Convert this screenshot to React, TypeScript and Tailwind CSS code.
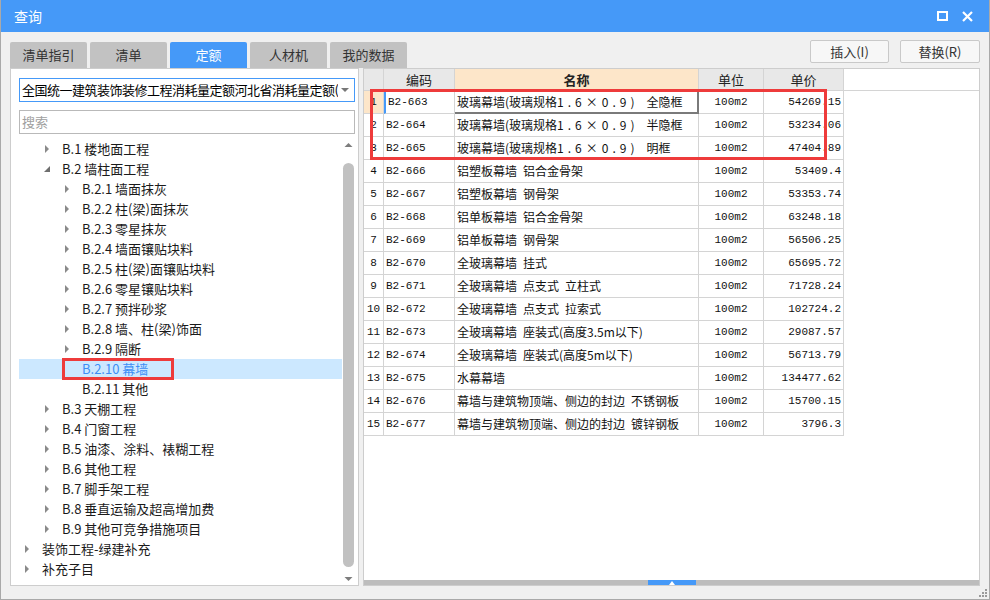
import React from "react";

const UI = { fontFamily: '"Noto Sans CJK SC", "Noto Sans", sans-serif' };
const TBL = { fontFamily: '"Liberation Mono", "Noto Sans CJK SC", monospace' };
const CJK = { fontFamily: '"Noto Sans CJK SC", sans-serif' };

type Node = { label: string; level: number; arrow: "right" | "down" | "none"; selected?: boolean };

const tree: Node[] = [
  { label: "B.1 楼地面工程", level: 1, arrow: "right" },
  { label: "B.2 墙柱面工程", level: 1, arrow: "down" },
  { label: "B.2.1 墙面抹灰", level: 2, arrow: "right" },
  { label: "B.2.2 柱(梁)面抹灰", level: 2, arrow: "right" },
  { label: "B.2.3 零星抹灰", level: 2, arrow: "right" },
  { label: "B.2.4 墙面镶贴块料", level: 2, arrow: "right" },
  { label: "B.2.5 柱(梁)面镶贴块料", level: 2, arrow: "right" },
  { label: "B.2.6 零星镶贴块料", level: 2, arrow: "right" },
  { label: "B.2.7 预拌砂浆", level: 2, arrow: "right" },
  { label: "B.2.8 墙、柱(梁)饰面", level: 2, arrow: "right" },
  { label: "B.2.9 隔断", level: 2, arrow: "right" },
  { label: "B.2.10 幕墙", level: 2, arrow: "none", selected: true },
  { label: "B.2.11 其他", level: 2, arrow: "none" },
  { label: "B.3 天棚工程", level: 1, arrow: "right" },
  { label: "B.4 门窗工程", level: 1, arrow: "right" },
  { label: "B.5 油漆、涂料、裱糊工程", level: 1, arrow: "right" },
  { label: "B.6 其他工程", level: 1, arrow: "right" },
  { label: "B.7 脚手架工程", level: 1, arrow: "right" },
  { label: "B.8 垂直运输及超高增加费", level: 1, arrow: "right" },
  { label: "B.9 其他可竞争措施项目", level: 1, arrow: "right" },
  { label: "装饰工程-绿建补充", level: 0, arrow: "right" },
  { label: "补充子目", level: 0, arrow: "right" },
];

const rows: [string, string, string, string][] = [
  ["B2-663", "玻璃幕墙(玻璃规格1.6×0.9) 全隐框", "100m2", "54269.15"],
  ["B2-664", "玻璃幕墙(玻璃规格1.6×0.9) 半隐框", "100m2", "53234.06"],
  ["B2-665", "玻璃幕墙(玻璃规格1.6×0.9) 明框", "100m2", "47404.89"],
  ["B2-666", "铝塑板幕墙 铝合金骨架", "100m2", "53409.4"],
  ["B2-667", "铝塑板幕墙 钢骨架", "100m2", "53353.74"],
  ["B2-668", "铝单板幕墙 铝合金骨架", "100m2", "63248.18"],
  ["B2-669", "铝单板幕墙 钢骨架", "100m2", "56506.25"],
  ["B2-670", "全玻璃幕墙 挂式", "100m2", "65695.72"],
  ["B2-671", "全玻璃幕墙 点支式 立柱式", "100m2", "71728.24"],
  ["B2-672", "全玻璃幕墙 点支式 拉索式", "100m2", "102724.2"],
  ["B2-673", "全玻璃幕墙 座装式(高度3.5m以下)", "100m2", "29087.57"],
  ["B2-674", "全玻璃幕墙 座装式(高度5m以下)", "100m2", "56713.79"],
  ["B2-675", "水幕幕墙", "100m2", "134477.62"],
  ["B2-676", "幕墙与建筑物顶端、侧边的封边 不锈钢板", "100m2", "15700.15"],
  ["B2-677", "幕墙与建筑物顶端、侧边的封边 镀锌钢板", "100m2", "3796.3"],
];

function Name({ text }: { text: string }) {
  const m = text.match(/^(.*?)(1\.6×0\.9)(.*)$/);
  const fix = (s: string) => s.replace(/ /g, "\u2002");
  if (m) {
    return (
      <>
        {fix(m[1])}
        <span className="tracking-[4px]">{m[2]}</span>
        {fix(m[3].replace(") ", ")\u2002\u2002"))}
      </>
    );
  }
  return <>{fix(text)}</>;
}

function Arrow({ dir }: { dir: "right" | "down" | "none" }) {
  if (dir === "none") return <span className="inline-block w-[8px]" />;
  if (dir === "right")
    return (
      <svg width="8" height="10" viewBox="0 0 8 10">
        <path d="M2 1 L6 5 L2 9 Z" fill="#8a8a8a" />
      </svg>
    );
  return (
    <svg width="8" height="10" viewBox="0 0 8 10">
      <path d="M7 2 L7 8 L1 8 Z" fill="#6f6f6f" />
    </svg>
  );
}

const tabs = ["清单指引", "清单", "定额", "人材机", "我的数据"];

export default function App() {
  return (
    <div className="w-[990px] h-[600px] bg-[#f0f0f0] border border-[#a9a9a9] border-t-0 flex flex-col overflow-hidden" style={UI}>
      {/* Title bar */}
      <div className="h-[32px] bg-[#4599f8] flex items-center px-[13px] text-white shrink-0">
        <span className="text-[14px]">查询</span>
        <div className="ml-auto flex items-center gap-[14px] pr-[3px]">
          <svg width="11" height="10" viewBox="0 0 11 10">
            <rect x="1" y="1" width="9" height="8" fill="none" stroke="white" strokeWidth="2" />
          </svg>
          <svg width="11" height="11" viewBox="0 0 11 11">
            <path d="M1 1 L10 10 M10 1 L1 10" stroke="white" strokeWidth="2.2" />
          </svg>
        </div>
      </div>

      <div className="flex-1 flex flex-col px-[9px]">
        {/* Tabs + buttons */}
        <div className="flex items-end h-[36px] shrink-0">
          <div className="flex gap-[3px] pt-[10px]">
            {tabs.map((t) => (
              <div
                key={t}
                className={
                  "w-[77px] h-[26px] flex items-center justify-center text-[13px] rounded-t-[2px] " +
                  (t === "定额" ? "bg-[#4599f8] text-white" : "bg-[#c2c2c2] text-[#333]")
                }
              >
                {t}
              </div>
            ))}
          </div>
          <div className="ml-auto flex gap-[11px] self-start pt-[8px] pr-0">
            <div className="w-[79px] h-[23px] bg-[#f7f7f7] border border-[#c9c9c9] rounded-[2px] flex items-center justify-center text-[13px] text-[#333]">
              插入(I)
            </div>
            <div className="w-[80px] h-[23px] bg-[#f7f7f7] border border-[#c9c9c9] rounded-[2px] flex items-center justify-center text-[13px] text-[#333]">
              替换(R)
            </div>
          </div>
        </div>

        {/* Main */}
        <div className="flex gap-[4px] h-[518px]">
          {/* Left panel */}
          <div className="w-[349px] h-full bg-white border border-[#cdcdcd] flex flex-col">
            <div className="pl-[8px] pr-[3px] pt-[9px] flex flex-col gap-[8px]">
              <div className="h-[24px] border border-[#4599f8] flex items-center pl-[2px] pr-[5px] overflow-hidden">
                <span className="text-[13px] text-black whitespace-nowrap overflow-hidden flex-1 tracking-[-0.5px]">
                  全国统一建筑装饰装修工程消耗量定额河北省消耗量定额(2012)
                </span>
                <svg width="8" height="5" viewBox="0 0 8 5" className="ml-[3px] shrink-0">
                  <path d="M0 0 L8 0 L4 4 Z" fill="#777" />
                </svg>
              </div>
              <div className="h-[24px] border border-[#b9b9b9] flex items-center pl-[2px]">
                <span className="text-[13px] text-[#a0a0a0]">搜索</span>
              </div>
            </div>
            <div className="flex flex-1 pt-[5px] pl-[8px] pr-[3px] min-h-0">
              <div className="flex-1 flex flex-col">
                {tree.map((n, i) => (
                  <div
                    key={i}
                    className={"h-[20px] flex items-center relative " + (n.selected ? "bg-[#cce8ff]" : "")}
                  >
                    <div className="flex items-center" style={{ paddingLeft: 4 + n.level * 20 }}>
                      <Arrow dir={n.arrow} />
                    </div>
                    <span
                      className={"text-[13px] whitespace-nowrap ml-[11px] " + (n.selected ? "text-[#3d8ef5]" : "text-[#1a1a1a]")}
                    >
                      {n.label}
                    </span>
                    {n.selected && (
                      <div className="absolute left-[43px] top-[-1px] w-[112px] h-[22px] border-[3px] border-[#ee3b3b]" />
                    )}
                  </div>
                ))}
              </div>
              {/* scrollbar */}
              <div className="w-[13px] flex flex-col items-center">
                <svg width="9" height="8" viewBox="0 0 9 8" className="mt-[2px]">
                  <path d="M0.5 6 L4.5 2 L8.5 6 Z" fill="#7d7d7d" />
                </svg>
                <div className="w-[11px] flex-1 bg-[#c1c1c1] rounded-full mt-[14px] mb-[8px]" />
                <svg width="9" height="8" viewBox="0 0 9 8" className="mb-[2px]">
                  <path d="M0.5 2 L4.5 6 L8.5 2 Z" fill="#7d7d7d" />
                </svg>
              </div>
            </div>
          </div>

          {/* Table panel */}
          <div className="flex-1 h-full bg-white border border-[#cdcdcd] flex flex-col relative">
            <div className="flex-1">
              <div className="flex h-[22px] text-[13px] text-[#222] border-b border-[#d4d4d4]" style={CJK}>
                <div className="w-[20px] bg-[#e8e8e8] border-r border-[#d4d4d4]" />
                <div className="w-[71px] bg-[#e8e8e8] border-r border-[#d4d4d4] flex items-center justify-center">编码</div>
                <div className="w-[244px] bg-[#fde6c9] border-r border-[#d4d4d4] flex items-center justify-center font-bold">名称</div>
                <div className="w-[65px] bg-[#e8e8e8] border-r border-[#d4d4d4] flex items-center justify-center">单位</div>
                <div className="w-[80px] bg-[#e8e8e8] border-r border-[#d4d4d4] flex items-center justify-center">单价</div>
              </div>
              {rows.map((r, i) => (
                <div key={i} className="flex h-[23px] text-[#111]">
                  <div
                    className={
                      "w-[20px] border-r border-b border-[#d4d4d4] flex items-center justify-center text-[11px] " +
                      (i === 0 ? "bg-[#fde6c9]" : "")
                    }
                    style={TBL}
                  >
                    {i + 1}
                  </div>
                  <div
                    className={
                      "w-[71px] border-r border-b border-[#d4d4d4] flex items-center pl-[2px] text-[11px] " +
                      (i === 0 ? "border-l-2 border-l-[#4599f8]" : "")
                    }
                    style={TBL}
                  >
                    {r[0]}
                  </div>
                  <div
                    className={
                      "w-[244px] flex items-center pl-[2px] text-[12px] whitespace-nowrap overflow-hidden " +
                      (i === 0
                        ? "border-t border-t-[#4599f8] border-r-2 border-r-[#7a7a7a] border-b-2 border-b-[#7a7a7a]"
                        : "border-r border-b border-[#d4d4d4]")
                    }
                    style={CJK}
                  >
                    <Name text={r[1]} />
                  </div>
                  <div className="w-[65px] border-r border-b border-[#d4d4d4] flex items-center justify-center text-[11px]" style={TBL}>
                    {r[2]}
                  </div>
                  <div className="w-[80px] border-r border-b border-[#d4d4d4] flex items-center justify-end pr-[2px] text-[11px]" style={TBL}>
                    {r[3]}
                  </div>
                </div>
              ))}
            </div>
            {/* bottom bar */}
            <div className="h-[5px] bg-[#bdbdbd] flex justify-center">
              <div className="w-[48px] h-full bg-[#4599f8] flex items-center justify-center">
                <svg width="6" height="4" viewBox="0 0 6 4">
                  <path d="M0 4 L3 0 L6 4 Z" fill="white" />
                </svg>
              </div>
            </div>
            {/* red box overlay */}
            <div className="absolute left-[6px] top-[20px] w-[457px] h-[71px] border-[3px] border-[#ee3b3b] pointer-events-none" />
          </div>
        </div>

        {/* bottom strip with grip */}
        <div className="flex-1 flex justify-end items-end pb-[2px] mr-[-7px]">
          <svg width="8" height="8" viewBox="0 0 8 8">
            <rect x="6" y="0" width="2" height="2" fill="#9a9a9a" />
            <rect x="3" y="3" width="2" height="2" fill="#9a9a9a" />
            <rect x="6" y="3" width="2" height="2" fill="#9a9a9a" />
            <rect x="0" y="6" width="2" height="2" fill="#9a9a9a" />
            <rect x="3" y="6" width="2" height="2" fill="#9a9a9a" />
            <rect x="6" y="6" width="2" height="2" fill="#9a9a9a" />
          </svg>
        </div>
      </div>
    </div>
  );
}
